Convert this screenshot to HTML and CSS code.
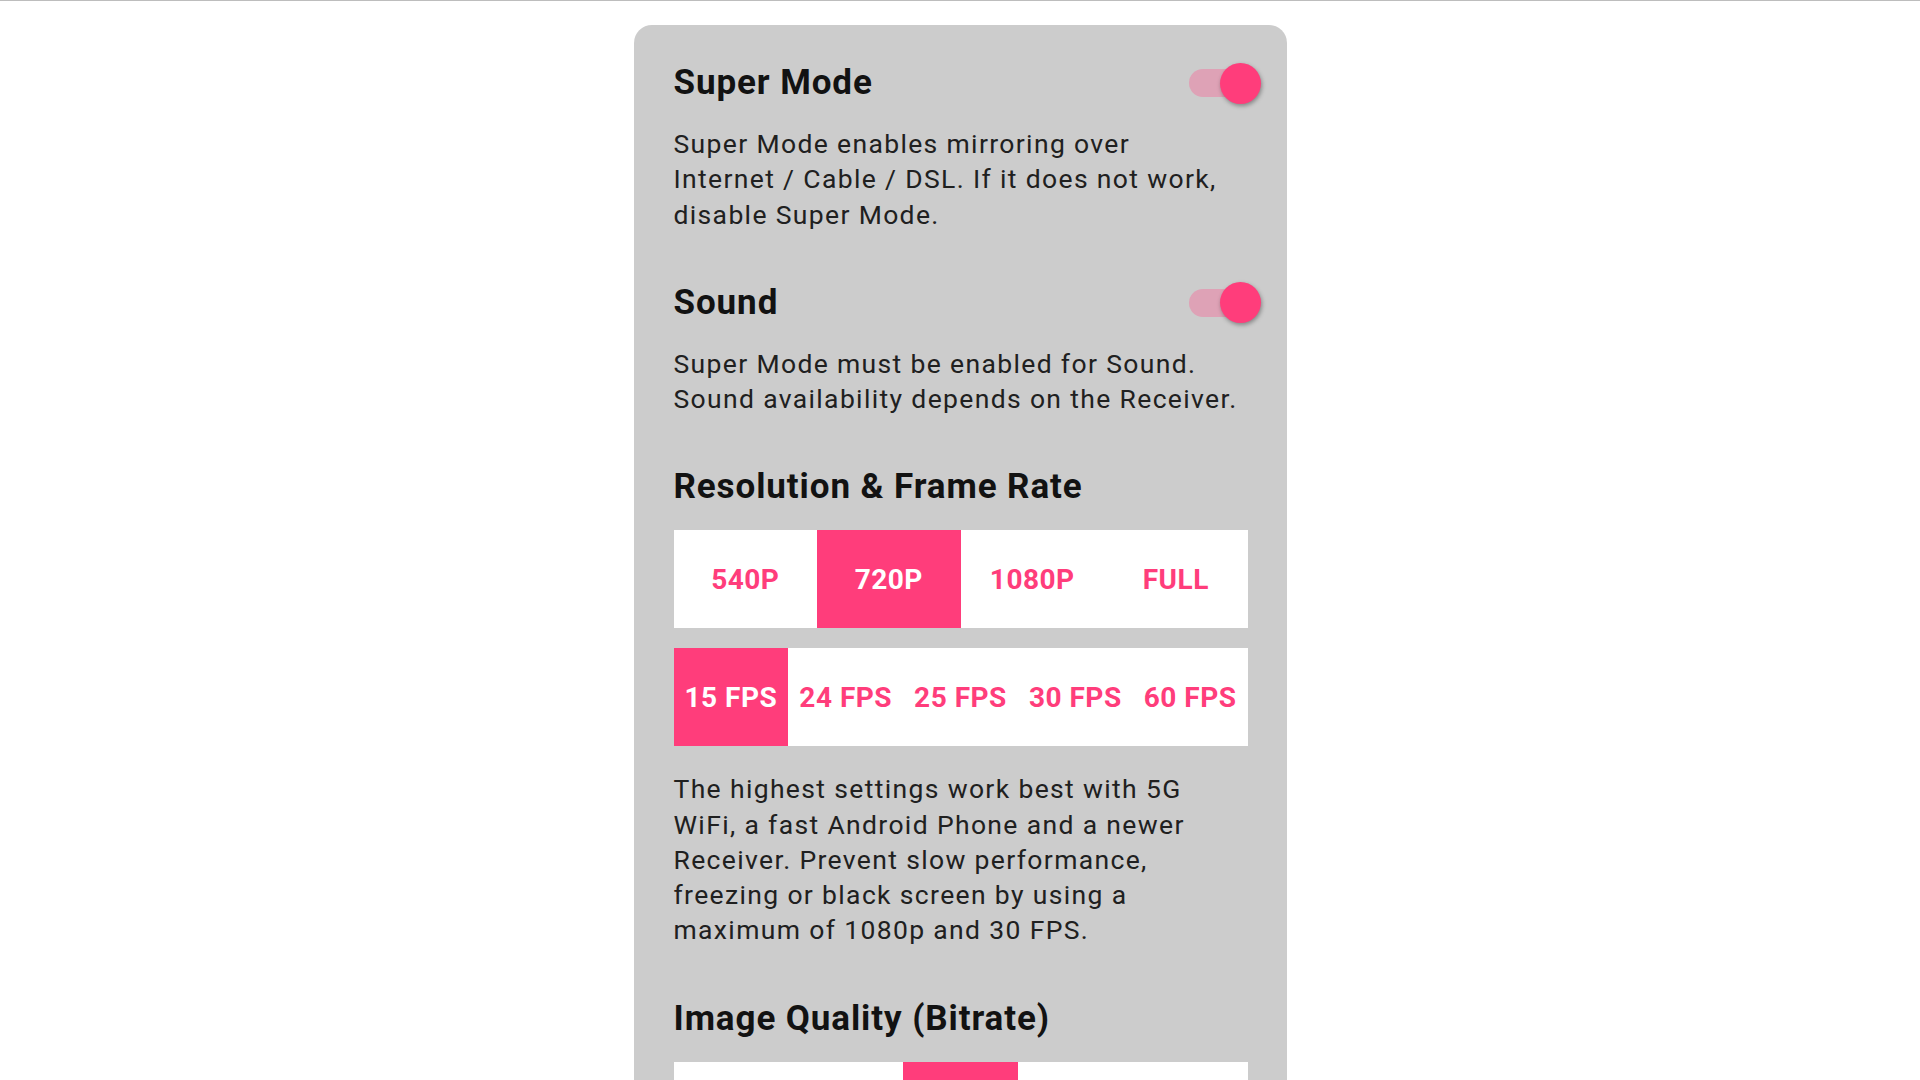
FILE: index.html
```html
<!DOCTYPE html>
<html lang="en">
<head>
<meta charset="utf-8">
<title>Settings</title>
<link rel="stylesheet" href="styles.css">
</head>
<body>
<main class="page">
  <div class="panel">
    <section class="section">
      <div class="header">
        <h2 class="title">Super Mode</h2>
        <div class="switch"><span class="track"></span><span class="knob"></span></div>
      </div>
      <p class="desc">Super Mode enables mirroring over<br>Internet / Cable / DSL. If it does not work,<br>disable Super Mode.</p>
    </section>

    <section class="section">
      <div class="header">
        <h2 class="title">Sound</h2>
        <div class="switch"><span class="track"></span><span class="knob"></span></div>
      </div>
      <p class="desc">Super Mode must be enabled for Sound.<br>Sound availability depends on the Receiver.</p>
    </section>

    <section class="section">
      <div class="header">
        <h2 class="title">Resolution &amp; Frame Rate</h2>
      </div>
      <div class="seg seg-4">
        <span class="opt">540P</span>
        <span class="opt on">720P</span>
        <span class="opt">1080P</span>
        <span class="opt">FULL</span>
      </div>
      <div class="seg seg-5">
        <span class="opt on">15 FPS</span>
        <span class="opt">24 FPS</span>
        <span class="opt">25 FPS</span>
        <span class="opt">30 FPS</span>
        <span class="opt">60 FPS</span>
      </div>
      <p class="desc desc-after">The highest settings work best with 5G<br>WiFi, a fast Android Phone and a newer<br>Receiver. Prevent slow performance,<br>freezing or black screen by using a<br>maximum of 1080p and 30 FPS.</p>
    </section>

    <section class="section">
      <div class="header">
        <h2 class="title">Image Quality (Bitrate)</h2>
      </div>
      <div class="seg seg-5">
        <span class="opt"></span>
        <span class="opt"></span>
        <span class="opt on"></span>
        <span class="opt"></span>
        <span class="opt"></span>
      </div>
    </section>
  </div>
</main>
</body>
</html>
```

FILE: styles.css
```css
html, body {
  margin: 0;
  padding: 0;
  background: #ffffff;
}

body {
  border-top: 1px solid #bdbdbd;
  font-family: Roboto, "Noto Sans", "Liberation Sans", sans-serif;
  height: 1079px;
  overflow: hidden;
}

.page {
  padding-top: 24px;
}

.panel {
  box-sizing: border-box;
  width: 653px;
  margin: 0 auto;
  min-height: 1200px;
  padding: 38px 39px 0 40px;
  background: #cccccc;
  border-radius: 18px 18px 0 0;
}

.section + .section {
  margin-top: 51px;
}

.header {
  display: flex;
  align-items: center;
  justify-content: space-between;
  height: 40px;
}

.title {
  margin: 0;
  font-size: 35px;
  line-height: 40px;
  font-weight: 700;
  letter-spacing: 0.9px;
  color: #121212;
  white-space: nowrap;
}

.switch {
  display: flex;
  align-items: center;
  margin-right: -13px;
}

.track {
  display: block;
  width: 66px;
  height: 28px;
  border-radius: 14px;
  background: #dea2b6;
}

.knob {
  display: block;
  width: 41px;
  height: 41px;
  margin-left: -35px;
  border-radius: 50%;
  background: #ff3d7b;
  box-shadow: 1px 2px 4px rgba(0, 0, 0, 0.35);
}

.desc {
  margin: 23px 0 0;
  font-size: 26.5px;
  line-height: 35.25px;
  font-weight: 400;
  letter-spacing: 1.35px;
  color: #202020;
  white-space: nowrap;
}

.desc-after {
  margin-top: 25px;
}

.seg {
  display: grid;
  height: 98px;
  margin-top: 23px;
  background: #ffffff;
}

.seg + .seg {
  margin-top: 20px;
}

.seg-4 {
  grid-template-columns: repeat(4, 1fr);
}

.seg-5 {
  grid-template-columns: repeat(5, 1fr);
}

.opt {
  display: flex;
  align-items: center;
  justify-content: center;
  font-size: 28px;
  font-weight: 700;
  letter-spacing: 0.5px;
  color: #ff3d7b;
  white-space: nowrap;
}

.opt.on {
  background: #ff3d7b;
  color: #ffffff;
}
```
